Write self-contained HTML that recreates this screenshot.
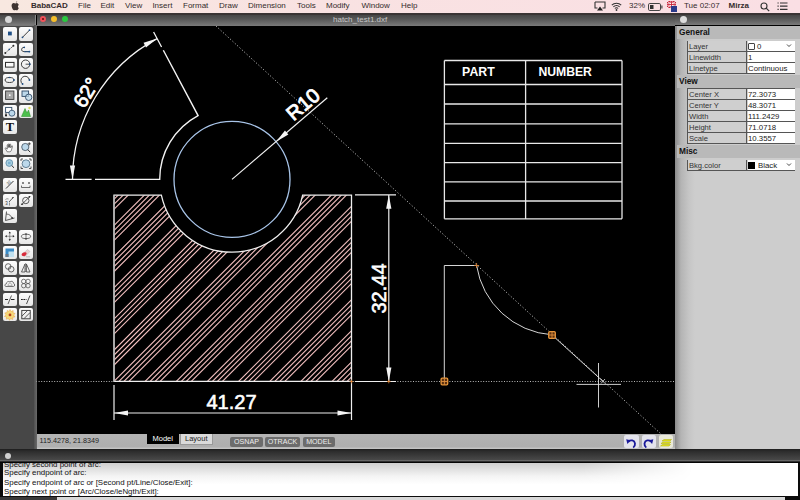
<!DOCTYPE html><html><head><meta charset="utf-8"><style>
*{margin:0;padding:0;box-sizing:border-box}
html,body{width:800px;height:500px;overflow:hidden;background:#000;font-family:"Liberation Sans",sans-serif}
.abs{position:absolute}
#menubar{left:0;top:0;width:800px;height:12.5px;background:linear-gradient(90deg,#f8e8e0 0%,#f9e2e2 40%,#fadfe4 100%);color:#352c2c;font-size:8px;line-height:12px;white-space:nowrap}
#menubar span{position:absolute;top:0}
.tb{background:linear-gradient(#464646 0%,#555 35%,#7a7a7a 100%)}
.btn{position:absolute;width:14.2px;height:13.6px;border-radius:2px;background:linear-gradient(#fdfdfd,#e6e6e6)}
.btn svg{position:absolute;left:0;top:0}
.prop{font-size:9.4px;color:#222}
.hdr{position:absolute;left:677px;width:123px;height:13px;background:#b9b9b9;font-weight:bold;font-size:8.3px;line-height:13px;padding-left:2px;color:#111}
.row{position:absolute;left:687px;width:107.5px;height:11px;border:1px solid #555;border-top:none}
.row .l{position:absolute;left:0;top:0;width:59px;height:10px;background:#cfcfcf;border-right:1px solid #555;font-size:7.6px;line-height:11px;padding-left:1px;color:#333;overflow:hidden;white-space:nowrap}
.row .v{position:absolute;left:60px;top:0;width:46.5px;height:10px;background:#fff;font-size:7.8px;line-height:11px;padding-left:0;color:#1a1a1a;overflow:hidden;white-space:nowrap}
.sbtn{position:absolute;top:437px;height:10px;border-radius:2px;background:#6c6c6c;color:#eee;font-size:7.1px;line-height:10px;text-align:center}
.cmd{position:absolute;left:1px;font-size:7.9px;color:#111;white-space:nowrap}
</style></head><body>

<div id="menubar" class="abs">
<svg class="abs" style="left:11px;top:1px" width="9" height="10" viewBox="0 0 9 10"><path d="M6.2 0.3C5.6 0.4 5 0.9 4.8 1.6 5.5 1.6 6.1 1.1 6.2 0.3ZM4.4 2.4C3.9 2.4 3.4 2 2.7 2 1.6 2 0.6 2.9 0.6 4.6 0.6 6.6 1.9 9.3 3 9.3 3.6 9.3 3.8 9 4.4 9 5 9 5.2 9.3 5.8 9.3 6.6 9.3 7.4 8 7.8 6.9 6.9 6.5 6.6 5.2 7.3 4.4 7.5 4.1 7.7 3.9 7.7 3.7 7.2 3 6.5 2.1 5.9 2.1 5.3 2.1 4.9 2.4 4.4 2.4Z" fill="#3e3431"/></svg>
<span style="left:31px;font-weight:bold;">BabaCAD</span>
<span style="left:78px;">File</span>
<span style="left:100.5px;">Edit</span>
<span style="left:125px;">View</span>
<span style="left:152.4px;">Insert</span>
<span style="left:183px;">Format</span>
<span style="left:219px;">Draw</span>
<span style="left:248px;">Dimension</span>
<span style="left:297px;">Tools</span>
<span style="left:326px;">Modify</span>
<span style="left:361.4px;">Window</span>
<span style="left:401px;">Help</span>
<svg class="abs" style="left:594px;top:1px" width="12" height="11" viewBox="0 0 12 11"><path d="M1 1h10v6h-2.5M3.5 7H1V1" fill="none" stroke="#333" stroke-width="1.1"/><path d="M6 5.5L9 9.5H3Z" fill="#222"/></svg>
<svg class="abs" style="left:611px;top:1.5px" width="11" height="9" viewBox="0 0 11 9"><path d="M0.8 3.2A6.5 6.5 0 0 1 10.2 3.2M2.4 4.9A4.2 4.2 0 0 1 8.6 4.9M3.9 6.5A2 2 0 0 1 7.1 6.5" fill="none" stroke="#333" stroke-width="1.1"/><circle cx="5.5" cy="8" r="0.9" fill="#333"/></svg>
<span style="left:629px">32%</span>
<svg class="abs" style="left:647.5px;top:2.5px" width="15" height="8" viewBox="0 0 15 8"><rect x="0.5" y="0.5" width="12" height="7" rx="1.3" fill="none" stroke="#444" stroke-width="1"/><rect x="2" y="2" width="3.5" height="4" fill="#333"/><rect x="13.3" y="2.5" width="1.2" height="3" fill="#444"/></svg>
<svg class="abs" style="left:667px;top:1px" width="10" height="11" viewBox="0 0 10 11"><rect x="0" y="0" width="9" height="7" fill="#c8243a"/><path d="M0 0L9 7M9 0L0 7" stroke="#fff" stroke-width="1"/><path d="M4.5 0V7M0 3.5H9" stroke="#fff" stroke-width="1.8"/><path d="M4.5 0V7M0 3.5H9" stroke="#c8243a" stroke-width="0.9"/><rect x="4" y="5" width="6" height="6" fill="#2a3a8a"/></svg>
<span style="left:684px">Tue 02:07</span>
<span style="left:728.5px;font-weight:bold">Mirza</span>
<svg class="abs" style="left:760px;top:1.5px" width="10" height="10" viewBox="0 0 10 10"><circle cx="4" cy="4" r="3" fill="none" stroke="#333" stroke-width="1.1"/><path d="M6.2 6.2L9.2 9.2" stroke="#333" stroke-width="1.2"/></svg>
<svg class="abs" style="left:777px;top:2px" width="11" height="9" viewBox="0 0 11 9"><path d="M0.5 1h1.2M3 1h7.5M0.5 4.2h1.2M3 4.2h7.5M0.5 7.4h1.2M3 7.4h7.5" stroke="#333" stroke-width="1.2"/></svg>
</div>
<div class="abs" style="left:0;top:12.5px;width:800px;height:2px;background:#3a3434"></div>
<div class="abs tb" style="left:0;top:14.5px;width:35px;height:10px"></div>
<div class="abs" style="left:4.5px;top:15.5px;width:7px;height:7px;border-radius:50%;background:#d8d8d8"></div>
<div class="abs" style="left:0;top:24.5px;width:35px;height:424.5px;background:#474747;border-top:1px solid #777"></div>
<div class="abs" style="left:34px;top:24.5px;width:2.5px;height:424.5px;background:linear-gradient(90deg,#505050,#6a6a6a)"></div>
<div class="abs" style="left:35px;top:14.5px;width:1px;height:10px;background:#8a8a8a"></div>
<div class="btn" style="left:2.6px;top:27px" id="b0"><svg width="14" height="14" viewBox="0 0 14 14"><rect x="5" y="4.6" width="3.8" height="3.8" fill="#1f4f86"/></svg></div>
<div class="btn" style="left:18.7px;top:27px" id="b1"><svg width="14" height="14" viewBox="0 0 14 14"><path d="M3.5 10.3L10.5 3.2" stroke="#2a2a2a" stroke-width="0.9"/><circle cx="3.5" cy="10.3" r="0.9" fill="#1f4f86"/><circle cx="10.5" cy="3.2" r="0.9" fill="#1f4f86"/></svg></div>
<div class="btn" style="left:2.6px;top:42.6px" id="b2"><svg width="14" height="14" viewBox="0 0 14 14"><path d="M2.3 10L10.4 2.8" stroke="#2a2a2a" stroke-width="0.8" stroke-dasharray="1.2 0.7"/><circle cx="2.3" cy="10" r="1" fill="#2a2a2a"/><circle cx="6.3" cy="6.4" r="0.8" fill="#1f4f86"/><circle cx="10.4" cy="2.8" r="1" fill="#2a2a2a"/></svg></div>
<div class="btn" style="left:18.7px;top:42.6px" id="b3"><svg width="14" height="14" viewBox="0 0 14 14"><path d="M5.2 4.4C3.2 4.4 2.6 5.6 2.6 6.6C2.6 7.8 3.6 8.6 5.2 8.6H10.4" stroke="#2a2a2a" stroke-width="0.9" fill="none"/><path d="M5.5 8.6H10.4" stroke="#1f4f86" stroke-width="1.3" stroke-dasharray="1.3 0.6"/><circle cx="5.3" cy="4.4" r="0.8" fill="#1f4f86"/><circle cx="10.4" cy="8.6" r="0.9" fill="#1f4f86"/></svg></div>
<div class="btn" style="left:2.6px;top:58.2px" id="b4"><svg width="14" height="14" viewBox="0 0 14 14"><rect x="2.5" y="4.4" width="8.5" height="4.7" fill="#fafafa" stroke="#2a2a2a" stroke-width="1"/></svg></div>
<div class="btn" style="left:18.7px;top:58.2px" id="b5"><svg width="14" height="14" viewBox="0 0 14 14"><circle cx="6.6" cy="6.2" r="4.2" fill="none" stroke="#2a2a2a" stroke-width="0.9"/><path d="M6.6 6.2H10.8" stroke="#2a2a2a" stroke-width="0.8"/><circle cx="10.8" cy="6.2" r="0.9" fill="#1f4f86"/></svg></div>
<div class="btn" style="left:2.6px;top:73.7px" id="b6"><svg width="14" height="14" viewBox="0 0 14 14"><ellipse cx="6.5" cy="6" rx="4.4" ry="2.5" fill="none" stroke="#2a2a2a" stroke-width="0.9"/><circle cx="6.5" cy="3.5" r="0.8" fill="#1f4f86"/><circle cx="10.9" cy="6" r="0.9" fill="#1f4f86"/></svg></div>
<div class="btn" style="left:18.7px;top:73.7px" id="b7"><svg width="14" height="14" viewBox="0 0 14 14"><path d="M3.6 10A4.3 4.3 0 1 1 10.4 5.8" stroke="#2a2a2a" stroke-width="0.9" fill="none"/><circle cx="3.6" cy="10" r="0.9" fill="#1f4f86"/><circle cx="10.4" cy="6" r="0.9" fill="#1f4f86"/></svg></div>
<div class="btn" style="left:2.6px;top:89.2px" id="b8"><svg width="14" height="14" viewBox="0 0 14 14"><rect x="2.6" y="2" width="8.3" height="8.4" fill="#a8a8a8" stroke="#3a3a3a" stroke-width="0.9"/><circle cx="6.75" cy="6.2" r="0.9" fill="#fff"/></svg></div>
<div class="btn" style="left:18.7px;top:89.2px" id="b9"><svg width="14" height="14" viewBox="0 0 14 14"><rect x="3" y="2" width="6.6" height="5.4" fill="#bcd8ea" stroke="#2f4a66" stroke-width="0.9"/><circle cx="9.7" cy="8.3" r="3.2" fill="#bcd8ea" stroke="#2f4a66" stroke-width="0.9" fill-opacity="0.7"/></svg></div>
<div class="btn" style="left:2.6px;top:104.8px" id="b10"><svg width="14" height="14" viewBox="0 0 14 14"><rect x="2.6" y="2.4" width="6.2" height="5" fill="#fff" stroke="#2f4a66" stroke-width="0.9"/><circle cx="8.9" cy="8.2" r="3" fill="#bcd8ea" stroke="#2f4a66" stroke-width="0.8"/><path d="M3 7.5L2 10.5A1 1 0 0 0 4 10.5Z" fill="#111"/></svg></div>
<div class="btn" style="left:18.7px;top:104.8px" id="b11"><svg width="14" height="14" viewBox="0 0 14 14"><path d="M2.5 11.5L6 3.5L8 8L9.5 5L11.5 11.5Z" fill="#4cc04c" stroke="#2a8a2a" stroke-width="0.5"/><circle cx="10.5" cy="3" r="1.2" fill="#e0e060"/></svg></div>
<div class="btn" style="left:2.6px;top:120.4px" id="b12"><svg width="14" height="14" viewBox="0 0 14 14"><text x="6.9" y="11.3" font-family="Liberation Serif" font-weight="bold" font-size="12.5" text-anchor="middle" fill="#111">T</text></svg></div>
<div class="btn" style="left:2.6px;top:141.2px" id="b13"><svg width="14" height="14" viewBox="0 0 14 14"><path d="M4.2 10.8L2.3 7.6C2 7 2.7 6.5 3.2 7L4.3 8.2L4.2 4.2C4.2 3.5 5.2 3.5 5.2 4.2L5.3 6.6L5.4 3.3C5.4 2.6 6.4 2.6 6.4 3.3L6.5 6.4L6.7 3.6C6.7 2.9 7.7 2.9 7.7 3.6L7.7 6.8L8.6 5C8.9 4.4 9.8 4.7 9.5 5.4L8.5 8.8C8.2 10 7.6 10.8 6.6 10.8Z" fill="#fff" stroke="#333" stroke-width="0.6" stroke-linejoin="round"/></svg></div>
<div class="btn" style="left:18.7px;top:141.2px" id="b14"><svg width="14" height="14" viewBox="0 0 14 14"><circle cx="6.3" cy="6" r="3.6" fill="#bcd8ea" stroke="#3a4a5a" stroke-width="0.8"/><path d="M8.8 8.6L11.2 11.2" stroke="#333" stroke-width="1"/><path d="M10.3 1.3V4.3M8.8 2.8H11.8" stroke="#222" stroke-width="0.7"/></svg></div>
<div class="btn" style="left:2.6px;top:157px" id="b15"><svg width="14" height="14" viewBox="0 0 14 14"><circle cx="6.3" cy="6" r="3.4" fill="#a8cfe0" stroke="#5a8aa8" stroke-width="0.8"/><rect x="5" y="4.8" width="2.6" height="2.4" fill="#7ab0d0"/><path d="M8.7 8.5L11 10.8" stroke="#333" stroke-width="1"/></svg></div>
<div class="btn" style="left:18.7px;top:157px" id="b16"><svg width="14" height="14" viewBox="0 0 14 14"><circle cx="7" cy="6.7" r="3.9" fill="#bcd8ea" stroke="#4a6a80" stroke-width="0.8"/><path d="M2 4V2H4M10 2H12V4M12 9.5V11.5H10M4 11.5H2V9.5" stroke="#333" stroke-width="0.8" fill="none"/></svg></div>
<div class="btn" style="left:2.6px;top:178px" id="b17"><svg width="14" height="14" viewBox="0 0 14 14"><path d="M3 10.5L10.5 3" stroke="#222" stroke-width="0.9"/><text x="5.2" y="7" font-size="4" transform="rotate(-45 5.2 7)" fill="#333">32</text></svg></div>
<div class="btn" style="left:18.7px;top:178px" id="b18"><svg width="14" height="14" viewBox="0 0 14 14"><path d="M2.5 9.5H11M2.5 7.6V9.5M11 7.6V9.5M3 5H5M9 5H11M4 4V6M10 4V6" stroke="#333" stroke-width="0.7"/></svg></div>
<div class="btn" style="left:2.6px;top:193.6px" id="b19"><svg width="14" height="14" viewBox="0 0 14 14"><path d="M6 8L10.6 3" stroke="#333" stroke-width="0.8"/><path d="M10.6 3L8.8 3.8L9.8 4.8Z" fill="#222"/><path d="M2.4 5.5A3 3 0 0 1 5.6 5" stroke="#555" stroke-width="0.6" fill="none"/><text x="2.2" y="10.5" font-size="4.5" fill="#333">3</text><path d="M6.5 8.5V11.5" stroke="#555" stroke-width="0.6"/></svg></div>
<div class="btn" style="left:18.7px;top:193.6px" id="b20"><svg width="14" height="14" viewBox="0 0 14 14"><circle cx="6.8" cy="6.5" r="3.2" fill="none" stroke="#333" stroke-width="0.8"/><path d="M2.3 11L11.3 2" stroke="#333" stroke-width="0.8"/><path d="M11.3 2L9.2 2.5L10.8 4.1ZM2.3 11L4.4 10.5L2.8 8.9Z" fill="#222"/></svg></div>
<div class="btn" style="left:2.6px;top:209.2px" id="b21"><svg width="14" height="14" viewBox="0 0 14 14"><path d="M2.5 11.5L3.5 2.5M2.5 11.5L11.5 9" stroke="#333" stroke-width="0.8"/><path d="M3.2 5A6 6 0 0 1 9 10" stroke="#333" stroke-width="0.7" fill="none"/><path d="M9 10L8.8 8L10.2 8.6Z" fill="#222"/></svg></div>
<div class="btn" style="left:2.6px;top:230.2px" id="b22"><svg width="14" height="14" viewBox="0 0 14 14"><path d="M6.75 2.5V10M3 6.25H10.5" stroke="#444" stroke-width="0.5"/><path d="M6.75 1.5L5.6 3.2H7.9ZM6.75 11L5.6 9.3H7.9ZM2 6.25L3.7 5.1V7.4ZM11.5 6.25L9.8 5.1V7.4Z" fill="#222"/></svg></div>
<div class="btn" style="left:18.7px;top:230.2px" id="b23"><svg width="14" height="14" viewBox="0 0 14 14"><ellipse cx="7" cy="6.4" rx="4.6" ry="2.2" fill="none" stroke="#333" stroke-width="0.7"/><path d="M7 3.5V9.5" stroke="#333" stroke-width="0.6"/><path d="M7 3L6 4.5H8ZM7 10L6 8.5H8Z" fill="#333"/></svg></div>
<div class="btn" style="left:2.6px;top:245.8px" id="b24"><svg width="14" height="14" viewBox="0 0 14 14"><rect x="2.5" y="2.5" width="8.5" height="8.5" fill="#3a8cc8"/><rect x="5.5" y="5.5" width="5.5" height="5.5" fill="#bfe0f0"/><rect x="2.5" y="8" width="3" height="3" fill="#6a7a8a"/></svg></div>
<div class="btn" style="left:18.7px;top:245.8px" id="b25"><svg width="14" height="14" viewBox="0 0 14 14"><path d="M3 8.5L8.5 3.5L11 5.5L6 10.5Z" fill="#e8d0d0" stroke="#aaa" stroke-width="0.4"/><path d="M2.6 8.5C2.6 7 4.5 6 6.5 6.2C8 6.4 8 8 6.5 9.5C5 10.8 2.6 10 2.6 8.5Z" fill="#d82a3a"/><path d="M7 10.8H11" stroke="#888" stroke-width="0.5"/></svg></div>
<div class="btn" style="left:2.6px;top:261.4px" id="b26"><svg width="14" height="14" viewBox="0 0 14 14"><circle cx="5.2" cy="5.5" r="2.8" fill="none" stroke="#444" stroke-width="0.8"/><circle cx="8.2" cy="8.2" r="2.8" fill="none" stroke="#444" stroke-width="0.8"/></svg></div>
<div class="btn" style="left:18.7px;top:261.4px" id="b27"><svg width="14" height="14" viewBox="0 0 14 14"><path d="M6.7 2V11.5" stroke="#444" stroke-width="0.6" stroke-dasharray="1 0.6"/><path d="M6 3L2.5 11H6Z" fill="none" stroke="#444" stroke-width="0.8"/><path d="M7.4 3L11 11H7.4Z" fill="none" stroke="#444" stroke-width="0.8"/></svg></div>
<div class="btn" style="left:2.6px;top:277px" id="b28"><svg width="14" height="14" viewBox="0 0 14 14"><path d="M3 9.5C1.5 9.5 1.5 7 3.2 7C3.2 5 5.5 3.8 7 5C8 3.6 10.5 4.2 10.5 6.3C12 6.5 12 9.5 10.5 9.5Z" fill="none" stroke="#555" stroke-width="0.8"/><path d="M5 7.5L7 5.8L9 7.5V8.8H5Z" fill="none" stroke="#777" stroke-width="0.5"/></svg></div>
<div class="btn" style="left:18.7px;top:277px" id="b29"><svg width="14" height="14" viewBox="0 0 14 14"><circle cx="4.7" cy="4.4" r="2.2" fill="none" stroke="#444" stroke-width="0.7"/><circle cx="9" cy="4.4" r="2.2" fill="none" stroke="#444" stroke-width="0.7"/><circle cx="4.7" cy="8.7" r="2.2" fill="none" stroke="#444" stroke-width="0.7"/><circle cx="9" cy="8.7" r="2.2" fill="none" stroke="#444" stroke-width="0.7"/></svg></div>
<div class="btn" style="left:2.6px;top:292.6px" id="b30"><svg width="14" height="14" viewBox="0 0 14 14"><path d="M2 6.5H5M8 6.5H11.5" stroke="#222" stroke-width="1"/><path d="M5 11L8.5 2.5" stroke="#222" stroke-width="0.7"/></svg></div>
<div class="btn" style="left:18.7px;top:292.6px" id="b31"><svg width="14" height="14" viewBox="0 0 14 14"><path d="M2 6.5H7.5" stroke="#222" stroke-width="1" stroke-dasharray="1.8 0.6"/><path d="M7.5 11L11 2.5" stroke="#222" stroke-width="0.8"/></svg></div>
<div class="btn" style="left:2.6px;top:307.8px" id="b32"><svg width="14" height="14" viewBox="0 0 14 14"><path d="M7 1.5L8 3.5L10.2 2.6L10 4.8L12.2 5.5L10.6 7L12 8.9L9.8 9.2L9.7 11.5L7.7 10.5L6.5 12.3L5.4 10.4L3.3 11.2L3.5 9L1.4 8.4L3 6.8L1.8 4.9L4 4.6L4.2 2.4L6.1 3.4Z" fill="#f6d878" stroke="#e8a040" stroke-width="0.5"/><circle cx="7" cy="6.9" r="1.4" fill="#b8401a"/></svg></div>
<div class="btn" style="left:18.7px;top:307.8px" id="b33"><svg width="14" height="14" viewBox="0 0 14 14"><rect x="2.8" y="2.4" width="8.4" height="8.4" fill="none" stroke="#333" stroke-width="0.9"/><path d="M3 8L8.5 2.6M5 10.6L11 4.6" stroke="#333" stroke-width="0.8"/></svg></div>
<div class="abs tb" style="left:36.5px;top:14.5px;width:638.5px;height:11.5px"></div>
<div class="abs" style="left:39.6px;top:15.8px;width:6.6px;height:6.6px;border-radius:50%;background:#f0525a"></div>
<div class="abs" style="left:41.8px;top:18px;width:2.2px;height:2.2px;border-radius:50%;background:#6a0a0a"></div>
<div class="abs" style="left:50.8px;top:15.8px;width:6.6px;height:6.6px;border-radius:50%;background:#f6be2a"></div>
<div class="abs" style="left:61.9px;top:15.8px;width:6.6px;height:6.6px;border-radius:50%;background:#2ac840"></div>
<div class="abs" style="left:333px;top:14px;font-size:8px;line-height:12px;color:#c8c8c8">hatch_test1.dxf</div>
<div class="abs" style="left:36.5px;top:434px;width:638.5px;height:15px;background:linear-gradient(#b4b4b4,#afafaf 85%,#cacaca 100%)"></div>
<div class="abs" style="left:39.5px;top:436px;font-size:7.2px;line-height:10px;color:#222">115.4278, 21.8349</div>
<div class="abs" style="left:147px;top:434px;width:31.5px;height:10px;background:#000;color:#fff;font-size:7.5px;line-height:10px;text-align:center">Model</div>
<div class="abs" style="left:180px;top:434px;width:32.5px;height:10.5px;background:#dadada;border:1px solid #999;border-top:none;color:#222;font-size:7.5px;line-height:10px;text-align:center">Layout</div>
<div class="sbtn" style="left:230px;width:33px">OSNAP</div>
<div class="sbtn" style="left:265px;width:35px">OTRACK</div>
<div class="sbtn" style="left:302.5px;width:32.5px">MODEL</div>
<div class="abs" style="left:624.4px;top:435px;width:14.4px;height:12.5px;border-radius:2px;background:#e4e4ec"><svg width="14" height="12" viewBox="0 0 14 12"><path d="M4.5 4.5 C6.5 2.5 10.5 3 11 6.5 C11.3 9 10 10 9.2 10.6" fill="none" stroke="#1a1a9a" stroke-width="1.8"/><path d="M2.2 2.2L6.8 3.2L3.4 7Z" fill="#1a1a9a"/></svg></div>
<div class="abs" style="left:642px;top:435px;width:13.6px;height:12.5px;border-radius:2px;background:#e4e4ec"><svg width="14" height="12" viewBox="0 0 14 12"><path d="M9 4.5 C7 2.5 3 3 2.5 6.5 C2.2 9 3.5 10 4.3 10.6" fill="none" stroke="#1a1a9a" stroke-width="1.8"/><path d="M11.3 2.2L6.7 3.2L10.1 7Z" fill="#1a1a9a"/></svg></div>
<div class="abs" style="left:659px;top:435px;width:14px;height:12.5px;border-radius:2px;background:#e8e8d8"><svg width="14" height="12" viewBox="0 0 14 12"><path d="M3 4L5 2.5H12.5L11 4ZM2 6.5L4 5H12L10.5 6.5ZM1.5 9L3.5 7.5H11.5L10 9Z" fill="#e8e820" stroke="#a8a800" stroke-width="0.5"/></svg></div>
<div class="abs" style="left:675px;top:14.5px;width:125px;height:10px;background:linear-gradient(#464646,#555 35%,#7a7a7a)"></div>
<div class="abs" style="left:679.5px;top:15.5px;width:7px;height:7px;border-radius:50%;background:#ddd"></div>
<div class="abs" style="left:675px;top:26px;width:125px;height:423px;background:linear-gradient(90deg,#8a8a8a 0px,#b4b4b4 6px,#c6c6c6 14px,#cdcdcd 20px,#cdcdcd 100%)"></div>
<div class="hdr" style="top:26px">General</div>
<div class="row" style="top:40.5px"><div class="l">Layer</div><div class="v"><span style="display:inline-block;width:7px;height:7px;border:1px solid #444;border-radius:1px;vertical-align:-1px;margin:0 2px 0 0"></span>0</div></div>
<div class="row" style="top:51.5px"><div class="l">Linewidth</div><div class="v">1</div></div>
<div class="row" style="top:62.5px"><div class="l">Linetype</div><div class="v">Continuous</div></div>
<div class="hdr" style="top:75px">View</div>
<div class="abs" style="left:687px;top:88px;width:108px;height:1px;background:#555"></div>
<div class="row" style="top:88.5px"><div class="l">Center X</div><div class="v">72.3073</div></div>
<div class="row" style="top:99.6px"><div class="l">Center Y</div><div class="v">48.3071</div></div>
<div class="row" style="top:110.7px"><div class="l">Width</div><div class="v">111.2429</div></div>
<div class="row" style="top:121.8px"><div class="l">Height</div><div class="v">71.0718</div></div>
<div class="row" style="top:133px"><div class="l">Scale</div><div class="v">10.3557</div></div>
<div class="hdr" style="top:145px">Misc</div>
<div class="row" style="top:159.5px"><div class="l">Bkg.color</div><div class="v"><span style="display:inline-block;width:7px;height:7px;background:#000;vertical-align:-1px;margin:0 3px 0 0"></span>Black</div></div>
<svg class="abs" style="left:786px;top:43px" width="6" height="5"><path d="M1 1.5L3 3.5L5 1.5" stroke="#333" stroke-width="0.9" fill="none"/></svg>
<svg class="abs" style="left:786px;top:162px" width="6" height="5"><path d="M1 1.5L3 3.5L5 1.5" stroke="#333" stroke-width="0.9" fill="none"/></svg>
<div class="abs" style="left:0;top:449px;width:800px;height:13.5px;background:linear-gradient(#1e1e1e 0%,#2c2c2c 15%,#474747 75%,#6a6a6a 83%,#0a0a0a 93%,#000 100%)"></div>
<div class="abs" style="left:4.8px;top:452.5px;width:6.6px;height:6.6px;border-radius:50%;background:#d0d0d0"></div>
<div class="abs" style="left:0;top:462.5px;width:800px;height:37.5px;background:#0c0c0c"></div>
<div class="abs" style="left:3px;top:463px;width:794.5px;height:32.5px;background:#fff;overflow:hidden"><div class="abs" style="left:0;top:0;width:794.5px;height:32.5px;background:linear-gradient(#cfcfcf,#f4f4f4 40%,#fff 65%);-webkit-mask-image:linear-gradient(90deg,#000 0,#000 580px,transparent 690px)"></div>
<div class="cmd" style="top:-3.4px;line-height:10px">Specify second point of arc:</div>
<div class="cmd" style="top:5px;line-height:10px">Specify endpoint of arc:</div>
<div class="cmd" style="top:14.8px;line-height:10px">Specify endpoint of arc or [Second pt/Line/Close/Exit]:</div>
<div class="cmd" style="top:24.1px;line-height:10px">Specify next point or [Arc/Close/leNgth/Exit]:</div>
</div>
<div class="abs" style="left:0;top:497px;width:57px;height:3px;background:#3a3a3a"></div>
<div class="abs" style="left:57px;top:497px;width:728px;height:3px;background:#d8d8d8"></div>
<svg class="abs" style="left:0;top:0" width="800" height="500" viewBox="0 0 800 500">
<defs><clipPath id="cv"><rect x="36.5" y="26" width="637.5" height="408"/></clipPath>
<clipPath id="hc"><path d="M114 195.2H161.35A72.3 72.3 0 0 0 302.65 195.2H351.5V381.4H114Z"/></clipPath>
</defs><g clip-path="url(#cv)">
<path d="M216 26L661 434" stroke="#c0c0c0" stroke-width="1" stroke-dasharray="1.1 2.1" fill="none"/>
<path d="M36 381.5H674" stroke="#b8b8b8" stroke-width="1" stroke-dasharray="1 1.6" fill="none"/>
<g clip-path="url(#hc)"><path d="M110.0 -331.6L356.0 -577.6M110.0 -326.6L356.0 -572.6M110.0 -321.6L356.0 -567.6M110.0 -316.6L356.0 -562.6M110.0 -300.4L356.0 -546.4M110.0 -295.4L356.0 -541.4M110.0 -290.4L356.0 -536.4M110.0 -285.4L356.0 -531.4M110.0 -269.3L356.0 -515.3M110.0 -264.3L356.0 -510.3M110.0 -259.3L356.0 -505.3M110.0 -254.3L356.0 -500.3M110.0 -238.1L356.0 -484.1M110.0 -233.1L356.0 -479.1M110.0 -228.1L356.0 -474.1M110.0 -223.1L356.0 -469.1M110.0 -206.9L356.0 -452.9M110.0 -201.9L356.0 -447.9M110.0 -196.9L356.0 -442.9M110.0 -191.9L356.0 -437.9M110.0 -175.8L356.0 -421.8M110.0 -170.8L356.0 -416.8M110.0 -165.8L356.0 -411.8M110.0 -160.8L356.0 -406.8M110.0 -144.6L356.0 -390.6M110.0 -139.6L356.0 -385.6M110.0 -134.6L356.0 -380.6M110.0 -129.6L356.0 -375.6M110.0 -113.4L356.0 -359.4M110.0 -108.4L356.0 -354.4M110.0 -103.4L356.0 -349.4M110.0 -98.4L356.0 -344.4M110.0 -82.2L356.0 -328.2M110.0 -77.2L356.0 -323.2M110.0 -72.2L356.0 -318.2M110.0 -67.2L356.0 -313.2M110.0 -51.1L356.0 -297.1M110.0 -46.1L356.0 -292.1M110.0 -41.1L356.0 -287.1M110.0 -36.1L356.0 -282.1M110.0 -19.9L356.0 -265.9M110.0 -14.9L356.0 -260.9M110.0 -9.9L356.0 -255.9M110.0 -4.9L356.0 -250.9M110.0 11.3L356.0 -234.7M110.0 16.3L356.0 -229.7M110.0 21.3L356.0 -224.7M110.0 26.3L356.0 -219.7M110.0 42.4L356.0 -203.6M110.0 47.4L356.0 -198.6M110.0 52.4L356.0 -193.6M110.0 57.4L356.0 -188.6M110.0 73.6L356.0 -172.4M110.0 78.6L356.0 -167.4M110.0 83.6L356.0 -162.4M110.0 88.6L356.0 -157.4M110.0 104.8L356.0 -141.2M110.0 109.8L356.0 -136.2M110.0 114.8L356.0 -131.2M110.0 119.8L356.0 -126.2M110.0 135.9L356.0 -110.1M110.0 140.9L356.0 -105.1M110.0 145.9L356.0 -100.1M110.0 150.9L356.0 -95.1M110.0 167.1L356.0 -78.9M110.0 172.1L356.0 -73.9M110.0 177.1L356.0 -68.9M110.0 182.1L356.0 -63.9M110.0 198.3L356.0 -47.7M110.0 203.3L356.0 -42.7M110.0 208.3L356.0 -37.7M110.0 213.3L356.0 -32.7M110.0 229.5L356.0 -16.5M110.0 234.5L356.0 -11.5M110.0 239.5L356.0 -6.5M110.0 244.5L356.0 -1.5M110.0 260.6L356.0 14.6M110.0 265.6L356.0 19.6M110.0 270.6L356.0 24.6M110.0 275.6L356.0 29.6M110.0 291.8L356.0 45.8M110.0 296.8L356.0 50.8M110.0 301.8L356.0 55.8M110.0 306.8L356.0 60.8M110.0 323.0L356.0 77.0M110.0 328.0L356.0 82.0M110.0 333.0L356.0 87.0M110.0 338.0L356.0 92.0M110.0 354.1L356.0 108.1M110.0 359.1L356.0 113.1M110.0 364.1L356.0 118.1M110.0 369.1L356.0 123.1M110.0 385.3L356.0 139.3M110.0 390.3L356.0 144.3M110.0 395.3L356.0 149.3M110.0 400.3L356.0 154.3M110.0 416.5L356.0 170.5M110.0 421.5L356.0 175.5M110.0 426.5L356.0 180.5M110.0 431.5L356.0 185.5M110.0 447.7L356.0 201.7M110.0 452.7L356.0 206.7M110.0 457.7L356.0 211.7M110.0 462.7L356.0 216.7M110.0 478.8L356.0 232.8M110.0 483.8L356.0 237.8M110.0 488.8L356.0 242.8M110.0 493.8L356.0 247.8M110.0 510.0L356.0 264.0M110.0 515.0L356.0 269.0M110.0 520.0L356.0 274.0M110.0 525.0L356.0 279.0M110.0 541.2L356.0 295.2M110.0 546.2L356.0 300.2M110.0 551.2L356.0 305.2M110.0 556.2L356.0 310.2M110.0 572.3L356.0 326.3M110.0 577.3L356.0 331.3M110.0 582.3L356.0 336.3M110.0 587.3L356.0 341.3M110.0 603.5L356.0 357.5M110.0 608.5L356.0 362.5M110.0 613.5L356.0 367.5M110.0 618.5L356.0 372.5M110.0 634.7L356.0 388.7M110.0 639.7L356.0 393.7M110.0 644.7L356.0 398.7M110.0 649.7L356.0 403.7" stroke="#eebcbc" stroke-width="1.15" fill="none"/></g>
<path d="M114 195.2H161.35A72.3 72.3 0 0 0 302.65 195.2H351.5V381.4H114Z" stroke="#eee" stroke-width="1.3" fill="none"/>
<path d="M114 195.2V381.4" stroke="#b0b0b0" stroke-width="1.4"/>
<circle cx="232.0" cy="179.4" r="58.0" stroke="#a8c4e8" stroke-width="1.3" fill="none"/>
<path d="M95 179.4H159.70A72.3 72.3 0 0 1 198.06 115.56L163.32 50.22" stroke="#f2f2f2" stroke-width="1.4" fill="none"/>
<path d="M91.60 179.4H65.50M161.58 46.96L153.60 31.95" stroke="#f2f2f2" stroke-width="1.3"/>
<path d="M72.50 179.40A159.5 159.5 0 0 1 157.12 38.57" stroke="#f2f2f2" stroke-width="1.3" fill="none"/>
<path d="M72.50 179.40L69.90 165.40L75.10 165.40Z" fill="#f4f4f4"/>
<path d="M157.12 38.57L145.98 47.44L143.54 42.85Z" fill="#f4f4f4"/>
<text x="0" y="0" transform="translate(87.5 93.5) rotate(-59)" font-size="20" fill="#fff" stroke="#fff" stroke-width="0.8" text-anchor="middle" dominant-baseline="middle">62°</text>
<path d="M232.0 179.4L327.29 97.73" stroke="#f2f2f2" stroke-width="1.2"/>
<path d="M276.04 141.66L284.98 130.57L288.36 134.52Z" fill="#f4f4f4"/>
<text x="0" y="0" transform="translate(304 105.5) rotate(-40.6)" font-size="20" fill="#fff" stroke="#fff" stroke-width="0.9" text-anchor="middle" dominant-baseline="middle">R10</text>
<path d="M114 385V420M351.5 382V420M114 413H351.5" stroke="#eee" stroke-width="1.2"/>
<path d="M114.00 413.00L128.00 410.40L128.00 415.60Z" fill="#f4f4f4"/>
<path d="M351.50 413.00L337.50 415.60L337.50 410.40Z" fill="#f4f4f4"/>
<text x="231.5" y="409.3" font-size="20" fill="#fff" stroke="#fff" stroke-width="0.6" text-anchor="middle">41.27</text>
<path d="M355 194.8H396M355 381.5H396M388.8 194.8V381.5" stroke="#eee" stroke-width="1.2"/>
<path d="M388.80 194.80L391.40 208.80L386.20 208.80Z" fill="#f4f4f4"/>
<path d="M388.80 381.50L386.20 367.50L391.40 367.50Z" fill="#f4f4f4"/>
<text x="0" y="0" transform="translate(385.5 288.5) rotate(-90)" font-size="20" fill="#fff" stroke="#fff" stroke-width="0.6" text-anchor="middle">32.44</text>
<path d="M444.4 60.5H622M444.4 84.5H622M444.4 104H622M444.4 123.8H622M444.4 143.4H622M444.4 162.6H622M444.4 181.8H622M444.4 201H622M444.4 218.8H622M444.4 60.5V218.8M525.6 60.5V218.8M622 60.5V218.8" stroke="#e8e8e8" stroke-width="1.3" fill="none"/>
<text x="478.4" y="76.3" font-size="12.3" font-weight="bold" fill="#fff" text-anchor="middle">PART</text>
<text x="565.2" y="76.3" font-size="12.2" font-weight="bold" fill="#fff" text-anchor="middle">NUMBER</text>
<path d="M444.3 378V265.5H476.6A82 82 0 0 0 551.8 334.8L603 381.4" stroke="#e0e0e0" stroke-width="0.95" fill="none"/>
<path d="M598.5 363V407.5M576.5 384.4H621" stroke="#e4e4e4" stroke-width="0.9"/>
<path d="M601 379L605 383.5M605 379L601 383.5" stroke="#ccc" stroke-width="0.9"/>
<rect x="441.10" y="378.20" width="6.6" height="6.6" rx="1" fill="#5a3010" stroke="#e8963a" stroke-width="1.3"/><path d="M444.40 378.20V384.80M441.10 381.50H447.70" stroke="#e09040" stroke-width="0.9"/>
<rect x="548.70" y="331.70" width="6.6" height="6.6" rx="1" fill="#5a3010" stroke="#e8963a" stroke-width="1.3"/><path d="M552.00 331.70V338.30M548.70 335.00H555.30" stroke="#e09040" stroke-width="0.9"/>
<path d="M474.1 265.5H479.1M476.6 263.0V268.0" stroke="#d8843a" stroke-width="0.9"/>
<path d="M349.7 381.5H353.3M351.5 379.7V383.3" stroke="#d8843a" stroke-width="0.9"/>
<path d="M387.0 381.5H390.6M388.8 379.7V383.3" stroke="#d8843a" stroke-width="0.9"/>
</g></svg>
</body></html>
